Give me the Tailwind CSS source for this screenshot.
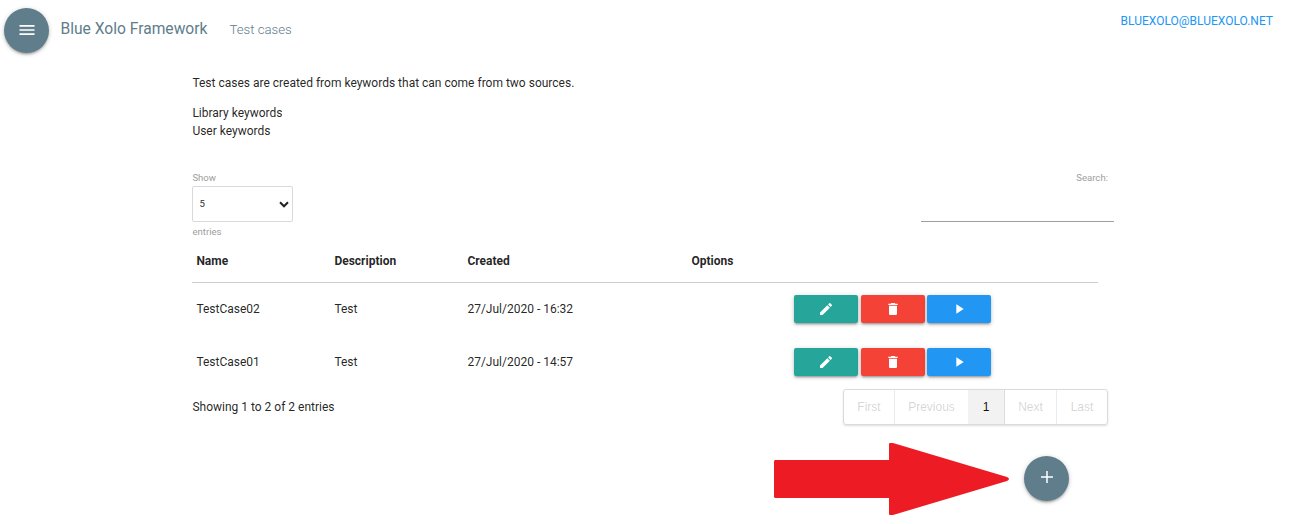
<!DOCTYPE html>
<html lang="en">
<head>
<meta charset="utf-8">
<title>Blue Xolo Framework</title>
<script src="https://cdn.jsdelivr.net/npm/@tailwindcss/browser@4"></script>
</head>
<body class="h-[524px] overflow-hidden bg-white font-[Roboto,sans-serif] text-[12px] leading-[18px] text-black/87">
<svg class="hidden">
  <symbol id="edit" viewBox="0 0 24 24"><path d="M3 17.25V21h3.75L17.81 9.94l-3.75-3.75L3 17.25zM20.71 7.04a1 1 0 0 0 0-1.41l-2.34-2.34a1 1 0 0 0-1.41 0l-1.83 1.83 3.75 3.75 1.83-1.83z"/></symbol>
  <symbol id="trash" viewBox="0 0 24 24"><path d="M6 19c0 1.1.9 2 2 2h8c1.1 0 2-.9 2-2V7H6v12zM19 4h-3.5l-1-1h-5l-1 1H5v2h14V4z"/></symbol>
  <symbol id="play" viewBox="0 0 24 24"><path d="M8 5v14l11-7z"/></symbol>
</svg>
<header class="flex h-[60px] items-start">
  <button class="mt-2 ml-1 flex size-[45px] items-center justify-center rounded-full bg-[#607d8b] shadow-[0_2px_2px_0_rgba(0,0,0,0.14),0_3px_1px_-2px_rgba(0,0,0,0.12),0_1px_5px_0_rgba(0,0,0,0.2)]">
    <svg class="-mt-[2px] size-5 fill-white" viewBox="0 0 24 24"><path d="M3 18h18v-2H3v2zm0-5h18v-2H3v2zm0-7v2h18V6H3z"/></svg>
  </button>
  <span class="mt-[18px] ml-[11.500px] text-[15.6px] leading-[22px] text-[#607d8b]">Blue Xolo Framework</span>
  <span class="mt-[19px] ml-[22px] text-[13.2px] leading-[22px] font-light text-[#607d8b]">Test cases</span>
  <a class="mt-3 mr-[31px] ml-auto text-[#2196f3]">BLUEXOLO@BLUEXOLO.NET</a>
</header>
<main class="ml-[192px] w-[922px] pt-[14px]">
  <p class="pl-[0.4px]">Test cases are created from keywords that can come from two sources.</p>
  <ul class="mt-3 pl-[0.4px]"><li>Library keywords</li><li>User keywords</li></ul>
  <div class="mt-[29px] flex h-[76px] justify-between text-[9.6px] text-[#9e9e9e]">
    <div>
      <div class="h-[17px] pl-[0.4px]">Show</div>
      <div class="flex h-9 w-[101px] items-center justify-between rounded-[2px] border border-[#d9d9d9] pr-[3px] pl-[6.400px] text-black/87">
        <span>5</span>
        <svg class="h-[7px] w-[10px] fill-none stroke-[#222] stroke-2" viewBox="0 0 10 7"><path d="M1 1.300l4 4 4-4"/></svg>
      </div>
      <div class="mt-[1px] pl-[0.4px]">entries</div>
    </div>
    <div class="w-[193px]">
      <div class="h-[17px] pr-[6px] text-right">Search:</div>
      <div class="h-9 border-b border-[#9e9e9e]"></div>
    </div>
  </div>
  <div class="w-[906px]">
    <div class="grid h-[38px] grid-cols-[138px_133px_224px_411px] border-b border-black/20 pt-[7px] font-bold [&>*]:pl-[4.4px]">
      <span>Name</span><span>Description</span><span>Created</span><span>Options</span>
    </div>
    <div class="-mt-px grid h-[53px] grid-cols-[138px_133px_224px_411px] items-center [&>*]:pl-[4.4px]">
      <span>TestCase02</span><span>Test</span><span>27/Jul/2020 - 16:32</span>
      <div class="flex pl-[107px]! [&>button]:flex [&>button]:h-7 [&>button]:w-16 [&>button]:items-center [&>button]:justify-center [&>button]:rounded-[2px] [&>button]:shadow-[0_2px_2px_0_rgba(0,0,0,0.14),0_3px_1px_-2px_rgba(0,0,0,0.12),0_1px_5px_0_rgba(0,0,0,0.2)]">
        <button class="bg-[#26a69a]"><svg class="size-4 fill-white"><use href="#edit"/></svg></button>
        <button class="ml-[3px] bg-[#f44336]"><svg class="size-4 fill-white"><use href="#trash"/></svg></button>
        <button class="ml-[2px] bg-[#2196f3]"><svg class="size-4 fill-white"><use href="#play"/></svg></button>
      </div>
    </div>
    <div class="mb-px grid h-[53px] grid-cols-[138px_133px_224px_411px] items-center [&>*]:pl-[4.4px]">
      <span>TestCase01</span><span>Test</span><span>27/Jul/2020 - 14:57</span>
      <div class="flex pl-[107px]! [&>button]:flex [&>button]:h-7 [&>button]:w-16 [&>button]:items-center [&>button]:justify-center [&>button]:rounded-[2px] [&>button]:shadow-[0_2px_2px_0_rgba(0,0,0,0.14),0_3px_1px_-2px_rgba(0,0,0,0.12),0_1px_5px_0_rgba(0,0,0,0.2)]">
        <button class="bg-[#26a69a]"><svg class="size-4 fill-white"><use href="#edit"/></svg></button>
        <button class="ml-[3px] bg-[#f44336]"><svg class="size-4 fill-white"><use href="#trash"/></svg></button>
        <button class="ml-[2px] bg-[#2196f3]"><svg class="size-4 fill-white"><use href="#play"/></svg></button>
      </div>
    </div>
  </div>
  <div class="flex h-9 items-center justify-between pr-[6px]">
    <span class="pl-[0.4px]">Showing 1 to 2 of 2 entries</span>
    <div class="grid h-9 w-[265px] grid-cols-[51px_73px_37px_52px_1fr] overflow-hidden rounded-[3px] border border-[#dadbdc] text-center font-['Liberation_Sans',sans-serif] leading-[34px] text-[#282828]/20 shadow-[0_1px_2px_0_rgba(34,36,38,0.15)]">
      <span class="border-r border-[#ebebeb]">First</span>
      <span>Previous</span>
      <span class="border-r border-[#dcdcdc] bg-[#f2f2f2] text-black/95">1</span>
      <span class="border-r border-[#ebebeb]">Next</span>
      <span>Last</span>
    </div>
  </div>
  <div class="mt-[18px] flex pl-[582px]">
    <svg class="h-[73px] w-[236px] fill-[#ed1c24]" viewBox="0 0 236 73"><path d="M1 17H115V1Q115 0 116 0H119L233 34Q237 36 233 38L119 72H116Q115 72 115 71V55H1L0 54V18Z"/></svg>
    <button class="mt-[13px] ml-[14px] flex size-[45px] items-center justify-center rounded-full bg-[#607d8b] shadow-[0_2px_2px_0_rgba(0,0,0,0.14),0_3px_1px_-2px_rgba(0,0,0,0.12),0_1px_5px_0_rgba(0,0,0,0.2)]">
      <svg class="-mt-[3px] size-[18px] fill-white" viewBox="0 0 24 24"><path d="M20 13h-7v7h-2v-7H4v-2h7V4h2v7h7z"/></svg>
    </button>
  </div>
</main>
</body>
</html>
